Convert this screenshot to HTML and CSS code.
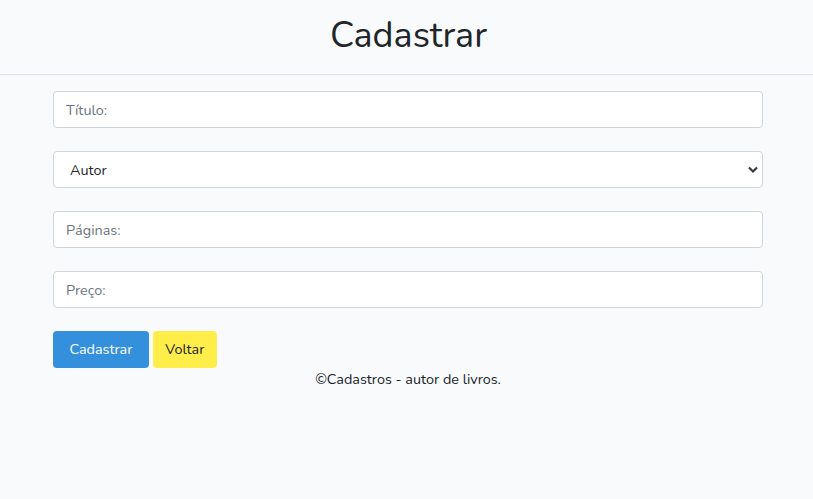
FILE: index.html
```html
<!DOCTYPE html>
<html lang="pt">
<head>
<meta charset="utf-8">
<title>Cadastrar</title>
<link rel="stylesheet" href="styles.css">
</head>
<body>
<header class="page-header">
  <h1 class="title">Cadastrar</h1>
</header>
<main class="container">
  <form class="form">
    <input class="field" type="text" placeholder="Título:">
    <select class="field select">
      <option>Autor</option>
    </select>
    <input class="field" type="text" placeholder="Páginas:">
    <input class="field" type="text" placeholder="Preço:">
    <div class="actions">
      <button type="button" class="btn btn-primary">Cadastrar</button>
      <button type="button" class="btn btn-warning">Voltar</button>
    </div>
  </form>
  <footer class="footer">©Cadastros - autor de livros.</footer>
</main>
</body>
</html>
```
FILE: styles.css
```css
* { box-sizing: border-box; }
html, body { margin: 0; padding: 0; }
body {
  background: #f8fafc;
  color: #212529;
  font-family: "Nunito", "Lato", "Open Sans", sans-serif;
  font-size: 14.4px;
  line-height: 1.6;
}
.page-header {
  height: 75px;
  border-bottom: 1px solid #dee2e6;
  display: flex;
  align-items: center;
  justify-content: center;
}
.title {
  margin: 0;
  font-weight: 400;
  font-size: 36px;
  line-height: 1.2;
  padding: 0 0 2px 4px;
}
.container {
  padding: 16px 50px 0 53px;
}
.form {
  display: flex;
  flex-direction: column;
  gap: 23px;
}
.field {
  display: block;
  width: 100%;
  height: 37px;
  padding: 6px 12px;
  font: inherit;
  color: #495057;
  background: #fff;
  border: 1px solid #ced4da;
  border-radius: 4px;
  outline: none;
}
.field::placeholder { color: #6c757d; }
.select {
  appearance: none;
  -webkit-appearance: none;
  padding: 7px 12px 5px 16px;
  color: #212529;
  background-image: url("data:image/svg+xml,%3Csvg xmlns='http://www.w3.org/2000/svg' width='10' height='8' viewBox='0 0 10 8'%3E%3Cpath d='M1 1.5l4 4 4-4' fill='none' stroke='%23343a40' stroke-width='2.2'/%3E%3C/svg%3E");
  background-repeat: no-repeat;
  background-position: right 4px center;
  background-size: 10px 8px;
}
.actions {
  display: flex;
  gap: 4px;
}
.btn {
  height: 37px;
  padding: 0 15.5px;
  font: inherit;
  border: 1px solid transparent;
  border-radius: 4px;
  cursor: pointer;
}
.btn-primary { background: #3490dc; color: #fff; }
.btn-warning { background: #ffed4a; color: #212529; padding: 0 11.5px; }
.footer {
  text-align: center;
  margin-top: 0;
}
```
